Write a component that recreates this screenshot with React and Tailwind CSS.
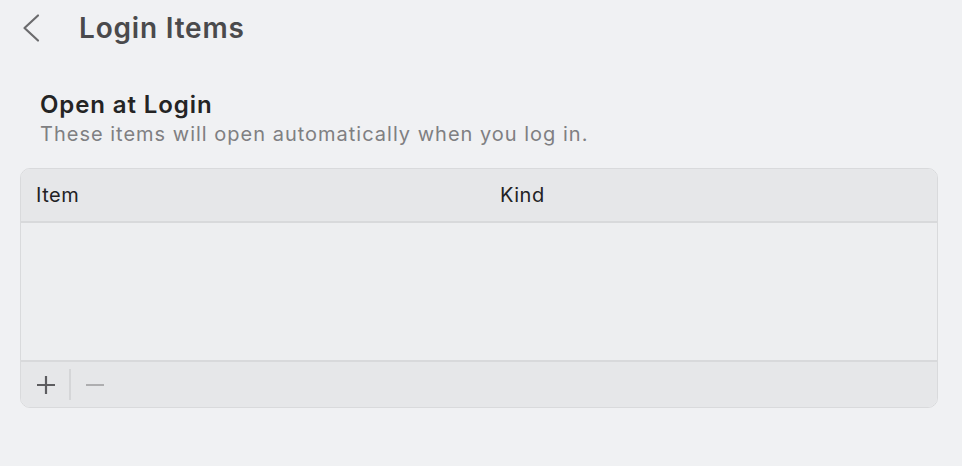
export default function App() {
  return (
    <div
      className="w-[962px] h-[466px] bg-[#f0f1f3] overflow-hidden"
      style={{ fontFamily: "Inter, 'Noto Sans', sans-serif" }}
    >
      {/* Title bar */}
      <div className="flex items-center h-[56px] pl-[16px]">
        <svg className="w-[28px] h-[32px] text-[#6b6b6d]" viewBox="0 0 28 32" fill="none" stroke="currentColor" strokeWidth="2.2" strokeLinecap="round" strokeLinejoin="round">
          <path d="M22 3.5 L8.5 16 L22 28.5" />
        </svg>
        <h1 className="ml-[35px] text-[28px] font-semibold text-[#4a4a4c] tracking-[0.8px]">Login Items</h1>
      </div>

      {/* Section */}
      <div className="px-[20px] pt-[35px]">
        <div className="pl-[20px]">
          <h2 className="text-[24px] font-semibold text-[#242424] leading-[28px] tracking-[0.9px]">Open at Login</h2>
          <p className="text-[20px] text-[#7f7f82] leading-[30px] tracking-[1px]">
            These items will open automatically when you log in.
          </p>
        </div>

        {/* Table */}
        <div className="mt-[19px] w-[918px] rounded-[10px] border border-[#d9dadc] overflow-hidden">
          <div className="flex items-center h-[54px] bg-[#e6e7e9] border-b-2 border-[#d8d9db] text-[20px] text-[#222224] tracking-[0.5px]">
            <div className="pl-[15px] w-[479px]">Item</div>
            <div>Kind</div>
          </div>
          <div className="h-[137px] bg-[#edeef0]" />
          <div className="flex items-center h-[47px] bg-[#e6e7e9] border-t-2 border-[#d8d9db]">
            <div className="w-[48px] flex justify-center pl-[2px]">
              <svg className="w-[20px] h-[20px] text-[#5d5d60]" viewBox="0 0 20 20" fill="none" stroke="currentColor" strokeWidth="2.2">
                <path d="M10 1 V19 M1 10 H19" />
              </svg>
            </div>
            <div className="w-[1.5px] h-[31px] bg-[#d5d6d8]" />
            <div className="w-[48px] flex justify-center">
              <svg className="w-[20px] h-[20px] text-[#aeaeb0]" viewBox="0 0 20 20" fill="none" stroke="currentColor" strokeWidth="2.2">
                <path d="M1 10 H19" />
              </svg>
            </div>
          </div>
        </div>
      </div>
    </div>
  );
}
